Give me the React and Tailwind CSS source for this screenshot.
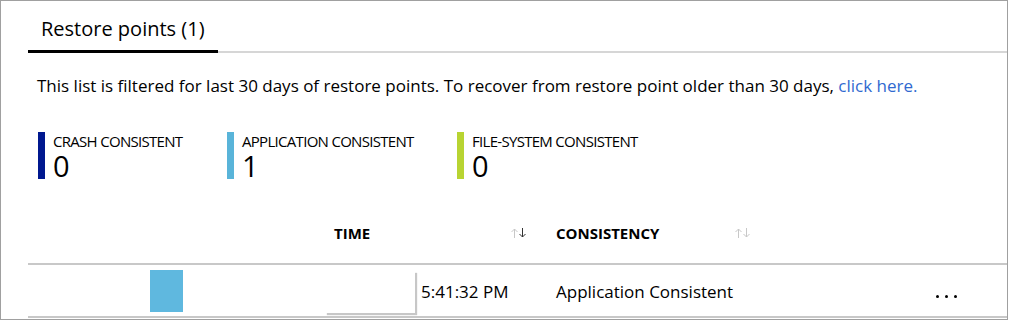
import React from 'react';

const font = { fontFamily: '"Open Sans", "Noto Sans", Arial, sans-serif' };

const stats = [
  { label: 'CRASH CONSISTENT', value: 0, bar: 'bg-[#00188f]', width: 'w-[189px]' },
  { label: 'APPLICATION CONSISTENT', value: 1, bar: 'bg-[#59b4d9]', width: 'w-[230px]' },
  { label: 'FILE-SYSTEM CONSISTENT', value: 0, bar: 'bg-[#b8d432]', width: 'w-[200px]' },
];

function SortIcon({ active }) {
  return (
    <svg width="16" height="10" viewBox="0 0 16 10" fill="none" strokeWidth="1">
      <g stroke="#c8c8c8">
        <path d="M3.5 10V1" />
        <path d="M0.5 4L3.5 1L6.5 4" />
      </g>
      <g stroke={active ? '#333333' : '#c8c8c8'}>
        <path d="M11.5 0V9" />
        <path d="M8.5 6L11.5 9L14.5 6" />
      </g>
    </svg>
  );
}

export default function App() {
  return (
    <div
      className="w-[1008px] h-[320px] bg-white border border-[#a0a0a0] overflow-hidden text-black antialiased"
      style={font}
    >
      <div className="pl-[27px]">
        {/* tabs */}
        <div className="flex items-end h-[52px]">
          <div className="w-[190px] h-[52px] border-b-[3px] border-black pl-[13px] pt-[14px] text-[20px] leading-[28px] whitespace-nowrap">
            Restore points (1)
          </div>
          <div className="flex-1 border-b-2 border-[#d6d6d6]" />
        </div>

        {/* note */}
        <p className="pl-[9px] mt-[22px] text-[17px] leading-[22px] whitespace-nowrap">
          This list is filtered for last 30 days of restore points. To recover from restore point older than 30
          days, <span className="text-[#3069d0]">click here.</span>
        </p>

        {/* summary */}
        <div className="flex pl-[10px] mt-[35px] h-[47px]">
          {stats.map((s) => (
            <div key={s.label} className={`flex ${s.width}`}>
              <div className={`w-[7px] h-[47px] ${s.bar}`} />
              <div className="pl-[8px]">
                <div className="text-[15px] leading-[18px] tracking-[-0.7px] whitespace-nowrap">{s.label}</div>
                <div className="text-[29px] leading-[28px] mt-[2px] font-medium">{s.value}</div>
              </div>
            </div>
          ))}
        </div>

        {/* table header */}
        <div className="grid grid-cols-[292px_222px_222px_1fr] h-[86px] items-end border-b-2 border-[#c8c8c8]">
          <div />
          <div className="flex items-center justify-between pl-[14px] pr-[15px] h-[48px] pb-[12px]">
            <span className="text-[15px] font-bold">TIME</span>
            <SortIcon active />
          </div>
          <div className="flex items-center justify-between pl-[14px] pr-[13px] h-[48px] pb-[12px]">
            <span className="text-[15px] font-bold">CONSISTENCY</span>
            <SortIcon />
          </div>
          <div />
        </div>

        {/* row */}
        <div className="grid grid-cols-[292px_222px_222px_1fr] h-[53px] border-b-2 border-[#c8c8c8] items-center">
          <div className="pl-[122px]">
            <div className="w-[33px] h-[42px] bg-[#5fb8df]" />
          </div>
          <div className="flex items-center pl-[5px] pt-[2px]">
            <div className="w-[90px] h-[42px] bg-white shadow-[2px_2px_1px_rgba(0,0,0,0.22)]" />
            <span className="ml-[6px] text-[17px] whitespace-nowrap">5:41:32 PM</span>
          </div>
          <div className="pl-[14px] pt-[2px] text-[17px] whitespace-nowrap">Application Consistent</div>
          <div className="flex justify-end pr-[50px] pt-[12px]">
            <div className="flex gap-[6px]">
              <span className="w-[3px] h-[3px] rounded-full bg-black" />
              <span className="w-[3px] h-[3px] rounded-full bg-black" />
              <span className="w-[3px] h-[3px] rounded-full bg-black" />
            </div>
          </div>
        </div>
      </div>
    </div>
  );
}
